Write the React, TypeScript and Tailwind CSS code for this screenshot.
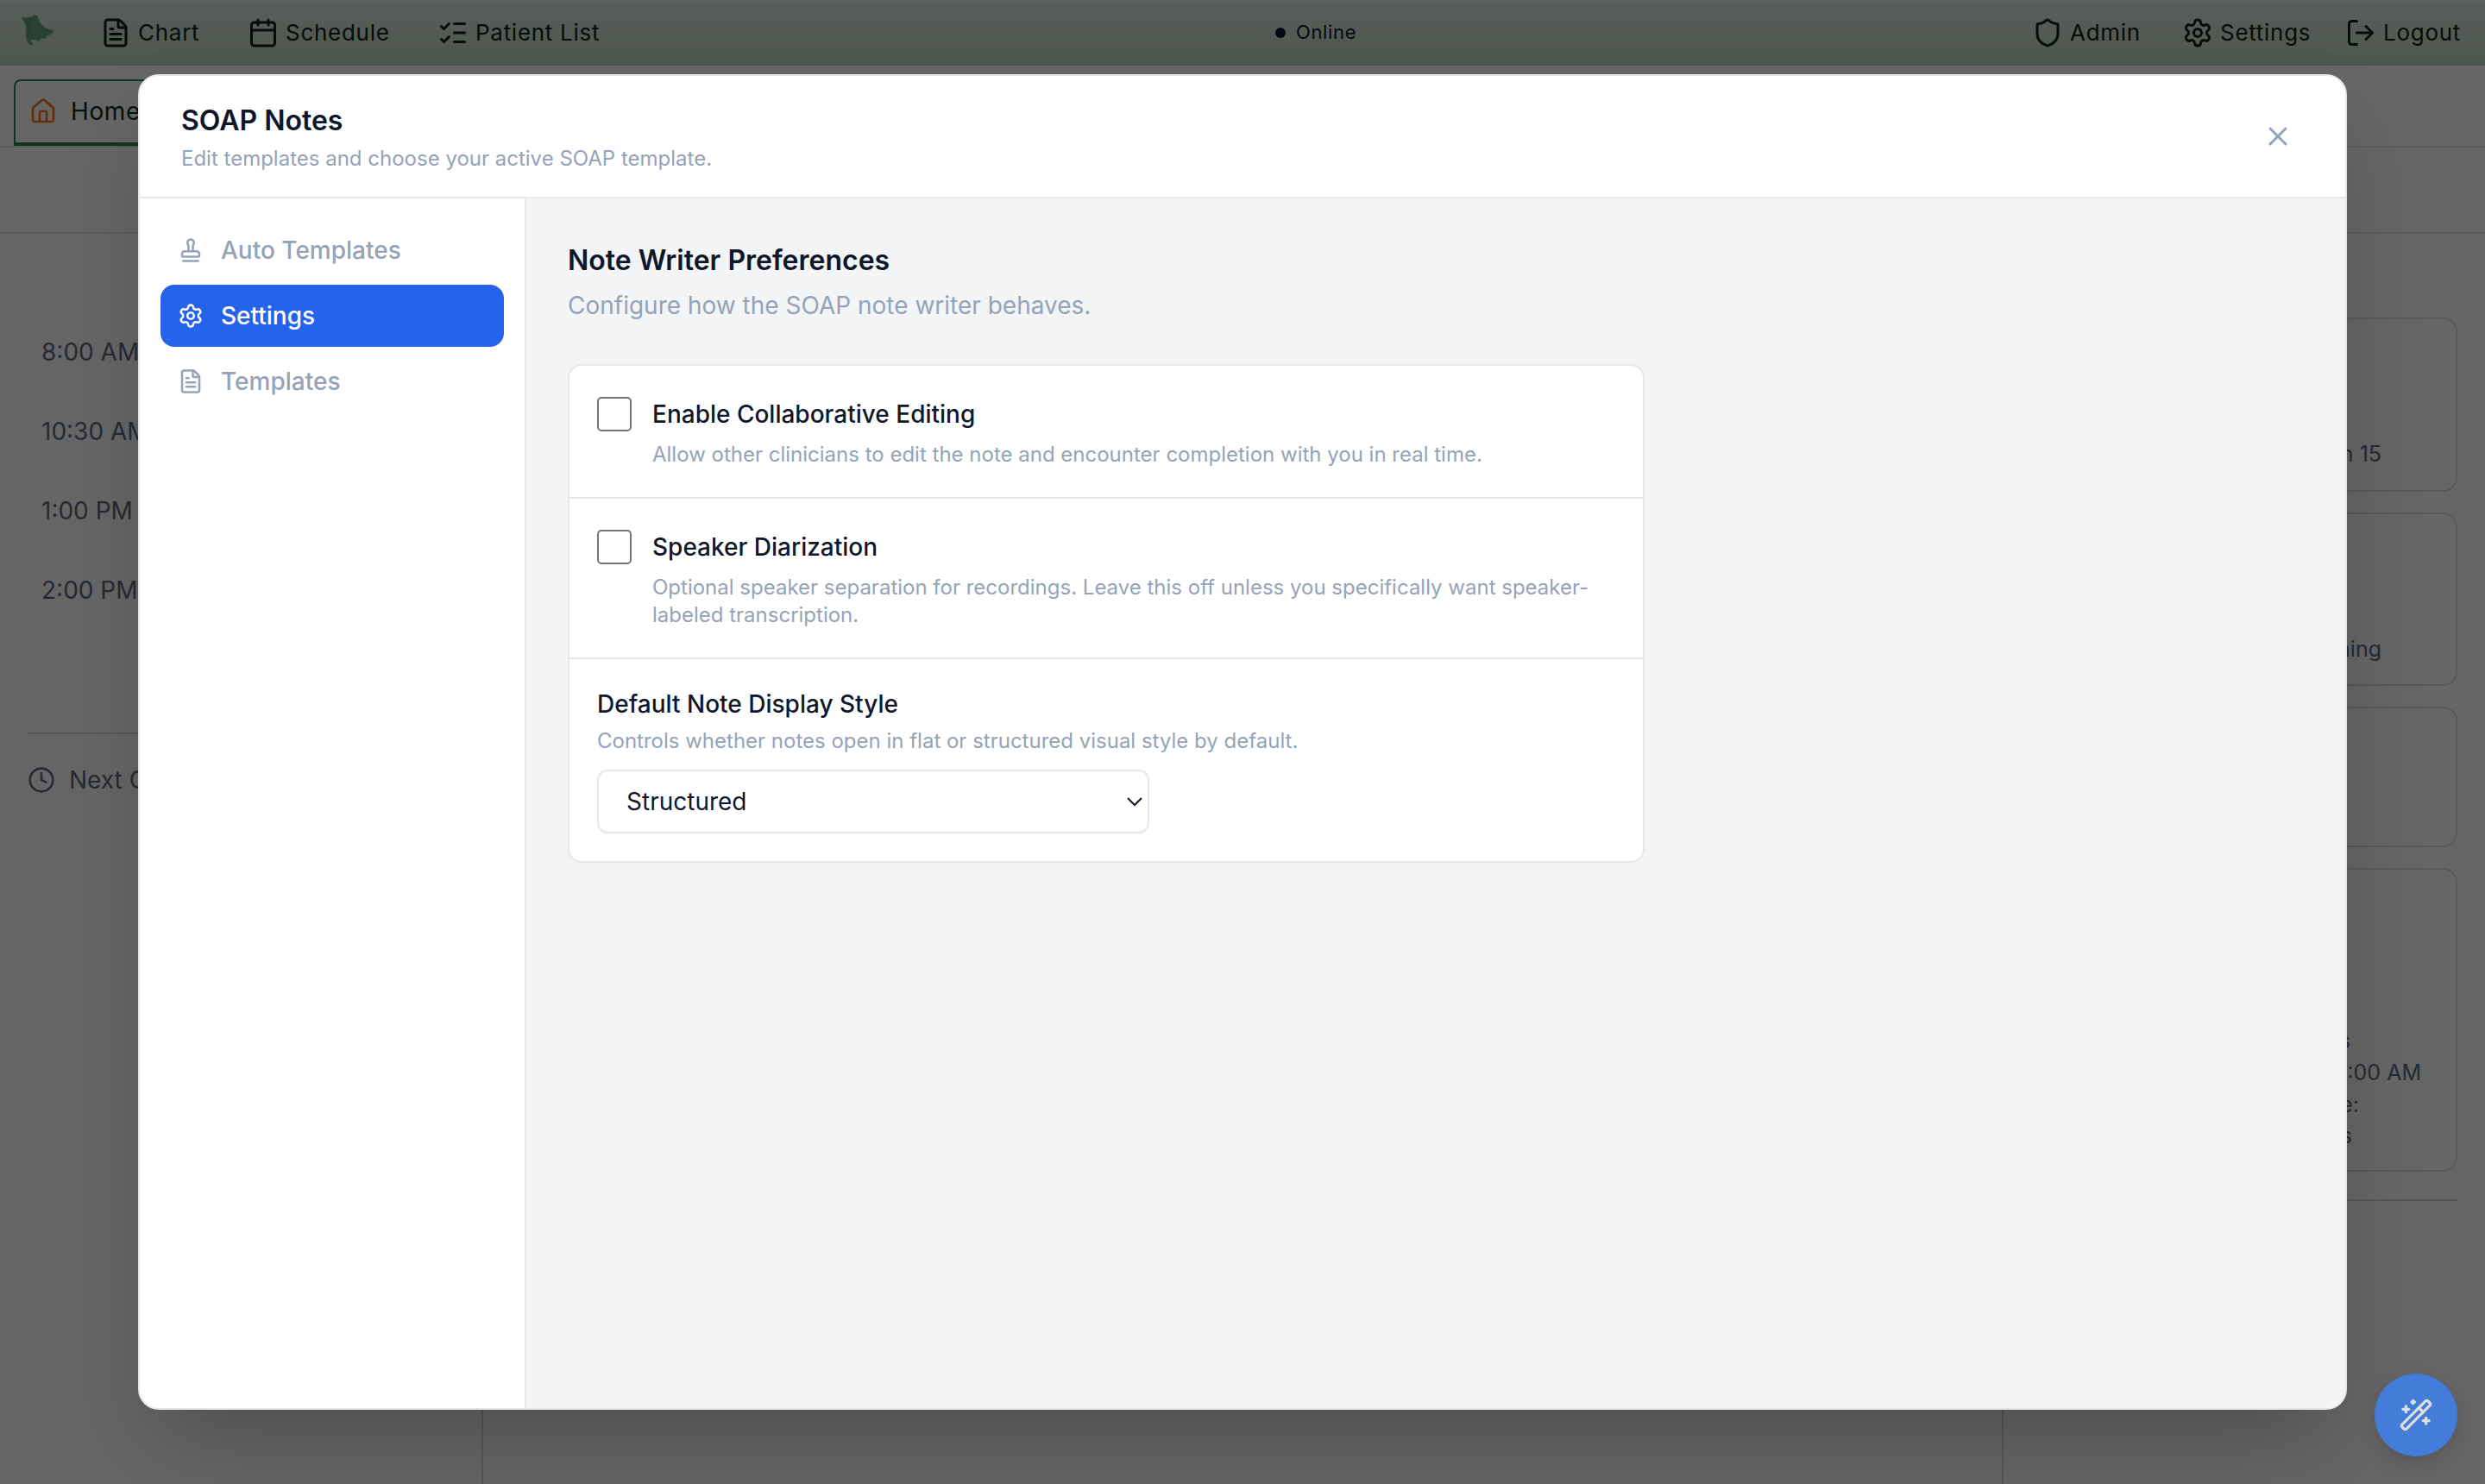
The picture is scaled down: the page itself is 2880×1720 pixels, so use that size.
import type { ReactNode } from "react";
import {
  Calendar,
  Clock,
  FileText,
  House,
  ListChecks,
  LogOut,
  Settings,
  Shield,
  Stamp,
  WandSparkles,
  X,
} from "lucide-react";

function Logo() {
  return (
    <svg viewBox="0 0 40 40" className="w-10 h-10" fill="none">
      <path
        d="M1 3 L4 4.5 L9 4 L14 3 L15 1 L19 2 L21 7 C24 13 28 18 38 19 C38 22 35 25 31 25 L28 29 L24 28 L21 32 L17 30 L12 30 C12 33 14 35 15 36 C11 37 8 35 7 31 C5 25 7 18 5 12 C4 8 1 6 1 3 Z"
        fill="#6ba57f"
      />
      <path
        d="M6 6 C11 14 8 24 11 34 M11 6 C13 14 11 22 14 29 M16 5 C19 14 24 20 30 24"
        stroke="#5c9a72"
        strokeWidth="1.5"
      />
    </svg>
  );
}

function NavItem({ icon, label }: { icon: ReactNode; label: string }) {
  return (
    <div className="flex items-center gap-2 text-[26px] leading-9 tracking-[0.72px] text-[#0b2115]">
      {icon}
      <span>{label}</span>
    </div>
  );
}

function TopBar() {
  return (
    <header className="h-[76px] shrink-0 flex items-center bg-linear-to-b from-[#dfeae3] to-[#c0dac5] border-t-2 border-t-[#efefea] border-b-2 border-b-[#b3d2bc]">
      <div className="w-[116px] pl-6 pb-1">
        <Logo />
      </div>
      <div className="flex items-center pb-px">
        <div className="w-[171px]">
          <NavItem icon={<FileText size={36} />} label="Chart" />
        </div>
        <div className="w-[220px]">
          <NavItem icon={<Calendar size={36} />} label="Schedule" />
        </div>
        <NavItem icon={<ListChecks size={36} />} label="Patient List" />
      </div>
      <div className="ml-auto flex items-center pb-px">
        <div className="w-[877px] flex items-center gap-3 text-[22px] tracking-[0.65px] text-[#0f172a]">
          <span className="w-3 h-3 rounded-full bg-[#0f172a]"></span>
          Online
        </div>
        <div className="w-[174px]">
          <NavItem icon={<Shield size={36} />} label="Admin" />
        </div>
        <div className="w-[189px]">
          <NavItem icon={<Settings size={36} />} label="Settings" />
        </div>
        <div className="w-[162px]">
          <NavItem icon={<LogOut size={36} />} label="Logout" />
        </div>
      </div>
    </header>
  );
}

const times = ["8:00 AM", "10:30 AM", "1:00 PM", "2:00 PM"];

function Dashboard() {
  return (
    <div className="h-full flex flex-col bg-white text-[#5d6b81]">
      <TopBar />
      <div className="h-[95px] shrink-0 flex items-start pt-4 pl-4 border-b-2 border-[#e5e7eb]">
        <div className="w-[240px] h-[77px] flex items-center gap-4 pl-4 pb-0.5 rounded-t-lg border-2 border-b-4 border-[#2f8553] text-[28px] tracking-[0.6px] text-[#142e20]">
          <House size={32} className="text-[#f97316]" />
          Home
        </div>
      </div>
      <div className="h-[100px] shrink-0 border-b-2 border-[#e5e7eb]"></div>
      <div className="flex-1 flex">
        <aside className="w-[560px] border-r-2 border-[#d4d5d8] pl-8">
          <div className="pt-[91px] pl-4 h-[580px] border-b-2 border-[#d8dadd] text-[28px]">
            {times.map((time) => (
              <div key={time} className="h-[92px] leading-[92px]">
                {time}
              </div>
            ))}
          </div>
          <div className="flex items-center gap-4 pt-[35px] text-[28px] leading-9">
            <Clock size={32} />
            Next Opening
          </div>
        </aside>
        <main className="flex-1"></main>
        <aside className="w-[560px] border-l-2 border-[#d4d5d8] pl-8 pr-8 text-[25px]">
          <div className="pt-[97px] h-[1121px] border-b-2 border-[#d8dadd] flex flex-col gap-6">
            <div className="h-[202px] shrink-0 rounded-2xl border-2 border-[#dcdee1] flex items-end justify-end pr-[86px] pb-[25px] leading-[34px]">
              Lunch in 15
            </div>
            <div className="h-[201px] shrink-0 rounded-2xl border-2 border-[#dcdee1] flex items-end justify-end pr-[86px] pb-6 leading-[34px]">
              This morning
            </div>
            <div className="h-[163px] shrink-0 rounded-2xl border-2 border-[#dcdee1]"></div>
            <div className="h-[352px] shrink-0 rounded-2xl border-2 border-[#dcdee1] flex flex-col items-end justify-end pb-[22px] leading-[37px]">
              <div className="pr-[122px]">3 notes</div>
              <div className="pr-[40px]">Tomorrow 8:00 AM</div>
              <div className="pr-[112px]">Schedule:</div>
              <div className="pr-[120px] leading-[35px]">2 visits</div>
            </div>
          </div>
        </aside>
      </div>
    </div>
  );
}

interface SidebarItemProps {
  icon: ReactNode;
  label: string;
  active?: boolean;
}

function SidebarItem({ icon, label, active }: SidebarItemProps) {
  return (
    <button
      className={`h-[72px] w-full flex items-center gap-5 px-5 rounded-2xl text-[28px] font-medium ${
        active ? "bg-[#2563eb] text-white" : "text-[#94a3b8]"
      }`}
    >
      {icon}
      {label}
    </button>
  );
}

function CheckboxRow({ title, description }: { title: string; description: string }) {
  return (
    <label className="flex gap-6 px-8 pt-[34px] pb-[33px] border-b-2 border-[#e5e7eb]">
      <span className="w-10 h-10 mt-0.5 shrink-0 rounded-[5px] border-2 border-[#767676] bg-white"></span>
      <span className="block">
        <span className="block text-[28px] leading-11 font-medium text-[#0f172a]">{title}</span>
        <span className="block mt-[9px] text-[24px] leading-8 text-[#94a3b8]">{description}</span>
      </span>
    </label>
  );
}

function SoapNotesDialog() {
  return (
    <div className="w-[2560px] h-[1548px] flex flex-col rounded-3xl border-2 border-[#e5e7eb] bg-white overflow-hidden shadow-[0_50px_100px_-24px_rgba(0,0,0,0.25)]">
      <div className="h-[142px] shrink-0 flex items-center justify-between pl-12 pr-[60px] border-b-2 border-[#e5e7eb]">
        <div className="pt-0.5">
          <h2 className="text-[32px] leading-12 font-semibold text-[#0f172a]">SOAP Notes</h2>
          <p className="mt-0.5 text-[24px] leading-9 text-[#94a3b8]">
            Edit templates and choose your active SOAP template.
          </p>
        </div>
        <X size={36} className="text-[#94a3b8]" />
      </div>
      <div className="flex-1 flex">
        <nav className="w-[448px] shrink-0 flex flex-col gap-1 p-6 border-r-2 border-[#e5e7eb]">
          <SidebarItem icon={<Stamp size={30} />} label="Auto Templates" />
          <SidebarItem icon={<Settings size={30} />} label="Settings" active />
          <SidebarItem icon={<FileText size={30} />} label="Templates" />
        </nav>
        <section className="flex-1 bg-[#f3f4f6] px-12 pt-12">
          <h3 className="text-[32px] leading-12 font-semibold text-[#0f172a]">Note Writer Preferences</h3>
          <p className="mt-[7px] text-[28px] leading-[42px] text-[#94a3b8]">
            Configure how the SOAP note writer behaves.
          </p>
          <div className="w-[1248px] mt-[47px] rounded-2xl border-2 border-[#e5e7eb] bg-white">
            <CheckboxRow
              title="Enable Collaborative Editing"
              description="Allow other clinicians to edit the note and encounter completion with you in real time."
            />
            <CheckboxRow
              title="Speaker Diarization"
              description="Optional speaker separation for recordings. Leave this off unless you specifically want speaker-labeled transcription."
            />
            <div className="px-8 pt-[31px] pb-8">
              <div className="text-[28px] leading-[42px] font-medium text-[#0f172a]">Default Note Display Style</div>
              <div className="mt-1 text-[24px] leading-9 text-[#94a3b8]">
                Controls whether notes open in flat or structured visual style by default.
              </div>
              <div className="w-[640px] h-[74px] mt-[15px] flex items-center justify-between pl-8 pr-[5px] rounded-xl border-2 border-[#e5e7eb] text-[28px] text-[#0f172a]">
                Structured
                <svg viewBox="0 0 20 12" className="w-5 h-3" fill="none" stroke="#0f172a" strokeWidth="2">
                  <path d="M2 2 L10 10 L18 2" />
                </svg>
              </div>
            </div>
          </div>
        </section>
      </div>
    </div>
  );
}

export default function App() {
  return (
    <div className="relative w-[2880px] h-[1720px] overflow-hidden font-['Inter',sans-serif]">
      <Dashboard />
      <div className="absolute inset-0 flex items-center justify-center bg-black/60">
        <SoapNotesDialog />
      </div>
      <button className="absolute right-8 bottom-8 w-24 h-24 flex items-center justify-center rounded-full bg-[#447cd9] text-[#dedede] shadow-[0_8px_24px_rgba(0,0,0,0.15)]">
        <WandSparkles size={40} />
      </button>
    </div>
  );
}
